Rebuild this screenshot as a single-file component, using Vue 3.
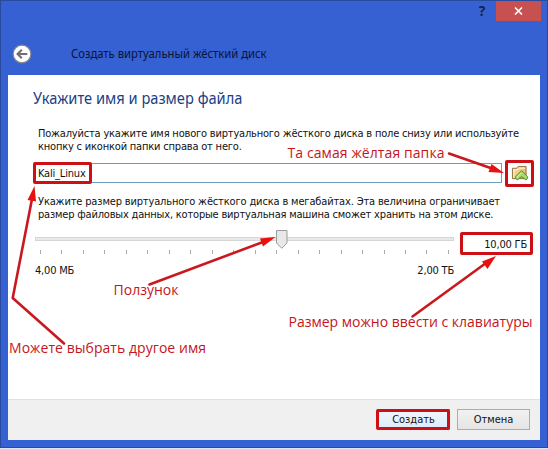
<script setup>
const ticks = Array.from({ length: 20 }, (_, i) => i)
</script>

<template>
  <div class="window">
    <header class="titlebar">
      <div class="controls">
        <span class="help">?</span>
        <button class="close" aria-label="Закрыть">
          <svg width="9" height="8" viewBox="0 0 9 8"><path d="M1 .5 8 7.5M8 .5 1 7.5" stroke="#fff" stroke-width="1.6" /></svg>
        </button>
      </div>
      <div class="caption">
        <svg class="back" width="20" height="20" viewBox="0 0 20 20">
          <circle cx="10" cy="10" r="8.9" fill="#fff" stroke="#7f8492" stroke-width="1.2" />
          <path d="M15.3 10H6M9.8 5.8 5.6 10l4.2 4.2" fill="none" stroke="#707070" stroke-width="2.1" />
        </svg>
        <span class="caption-text">Создать виртуальный жёсткий диск</span>
      </div>
    </header>

    <main class="body">
      <h1>Укажите имя и размер файла</h1>
      <p class="name-help">
        <span>Пожалуйста укажите имя нового виртуального жёсткого диска в поле снизу или используйте</span>
        <span>кнопку с иконкой папки справа от него.</span>
      </p>
      <div class="file-row">
        <div class="input"><span>Kali_Linux</span></div>
        <svg class="folder" width="17" height="16" viewBox="0 0 18 17">
          <defs>
            <linearGradient id="fg" x1="0" y1="0" x2="1" y2="1"><stop offset="0" stop-color="#fbe9b4" /><stop offset="1" stop-color="#d9a84e" /></linearGradient>
          </defs>
          <path d="M1.500 14.500v-11h4.500l1.500-2h8.500v13z" fill="url(#fg)" stroke="#8d6a3c" />
          <path d="M3 13.500V5h5l1-1.500h6" fill="none" stroke="#fff3cc" />
          <path d="M11.200 6 17.400 12.300v2.200l-1.600 1.300-4.600-3.500-4.600 3.500L5 14.500v-2.200z" fill="#a5dc6c" stroke="#4d8a2c" />
          <path d="M11.200 8.200 6.600 12.800v1" fill="none" stroke="#e2f8c4" />
        </svg>
      </div>
      <p class="size-help">
        <span class="l3">Укажите размер виртуального жёсткого диска в мегабайтах. Эта величина ограничивает</span>
        <span>размер файловых данных, которые виртуальная машина сможет хранить на этом диске.</span>
      </p>
      <div class="size-row">
        <div class="slider">
          <div class="groove">
            <svg class="thumb" width="12" height="19" viewBox="0 0 12 19"><path d="M.5.5h10.500v12.500L5.750 18.300.5 13z" fill="#e8e8e8" stroke="#9c9c9c" /></svg>
          </div>
          <div class="ticks"><i v-for="t in ticks" :key="t"></i></div>
          <div class="range"><span>4,00 МБ</span><span>2,00 ТБ</span></div>
        </div>
        <div class="size"><span>10,00 ГБ</span></div>
      </div>
    </main>

    <footer class="footer">
      <button class="btn primary"><span>Создать</span></button>
      <button class="btn"><span>Отмена</span></button>
    </footer>

    <svg class="notes" width="548" height="449" viewBox="0 0 548 449">
      <g fill="none" stroke="#cc1016" stroke-width="3" stroke-linejoin="round">
        <rect x="34.500" y="163.500" width="56" height="19" rx=".5" />
        <rect x="506.500" y="161.500" width="26" height="24" rx=".5" />
        <rect x="461.500" y="233.500" width="70" height="20" rx=".5" />
        <rect x="377.500" y="410.500" width="71" height="18" rx=".5" />
      </g>
      <g fill="none" stroke="#c9181e" stroke-width="2.600" stroke-linecap="round" stroke-linejoin="round">
        <path d="M64 343.500 12.700 298 32 199" />
        <path d="M449 153.500 492 168.500" />
        <path d="M149.500 284.500 263 242" />
        <path d="M412.500 316.500 486 263" />
      </g>
      <g fill="#ea1010">
        <path d="M34.500 186 27.500 200 36 201.500z" />
        <path d="M504 173 488.500 172 491.500 164z" />
        <path d="M275.500 237 263 246.500 260 238.500z" />
        <path d="M496 256 487.500 269 482 261.500z" />
      </g>
      <g class="note-text">
        <text x="287.500" y="157.500" textLength="157">Та самая жёлтая папка</text>
        <text x="113.500" y="295" textLength="65">Ползунок</text>
        <text x="9" y="353" textLength="197">Можете выбрать другое имя</text>
        <text x="288.500" y="327" textLength="244">Размер можно ввести с клавиатуры</text>
      </g>
    </svg>
  </div>
</template>

<style>
body { margin: 0; background: #dce6f6; }
</style>

<style scoped>
.window {
  position: relative;
  box-sizing: border-box;
  width: 548px;
  height: 448px;
  padding: 0 7px 7px;
  border: 1px solid #2a4a9e;
  background: #3661d2;
  display: flex;
  flex-direction: column;
  font-family: "DejaVu Sans Condensed", "DejaVu Sans", sans-serif;
  font-stretch: condensed;
  font-size: 11px;
  letter-spacing: -0.19px;
  color: #111;
}
.titlebar { height: 74px; flex: none; display: flex; flex-direction: column; }
.controls { display: flex; justify-content: flex-end; height: 20px; }
.help { width: 28px; text-align: center; font: bold 14px/20px "Open Sans", sans-serif; color: #14234c; }
.close {
  width: 45px; height: 20px; margin-right: -1px; padding: 0; border: 0; background: #c75050;
  display: flex; align-items: center; justify-content: center;
}
.caption { display: flex; align-items: center; height: 20px; margin-top: 23px; padding-left: 4px; }
.back { flex: none; }
.caption-text {
  margin-left: 39px; font: 12px/20px "Noto Sans", sans-serif; letter-spacing: 0;
  transform: scaleX(.938); transform-origin: left; color: #0a1436; white-space: nowrap;
}
.body {
  box-sizing: border-box;
  height: 324px; flex: none;
  background: #fff;
  padding: 13px 6px 0 27px;
  display: flex; flex-direction: column;
}
h1 {
  margin: 0 0 0 -2px; height: 20px; font: 400 16px/20px "Noto Sans", sans-serif; letter-spacing: 0;
  transform: scaleX(.915); transform-origin: left; color: #1c3f86; white-space: nowrap;
}
p { margin: 0; white-space: nowrap; display: flex; flex-direction: column; align-items: flex-start; line-height: 13px; padding-left: 3px; }
.name-help { margin-top: 19px; }
.file-row { display: flex; align-items: flex-start; margin-top: 10px; height: 20px; gap: 9px; }
.input { box-sizing: border-box; width: 467px; height: 20px; border: 1px solid #6ba0bb; padding-left: 2px; line-height: 20px; background: #fff; }
.folder { margin-top: 2px; }
.size-help { margin-top: 12px; }
.l3 { letter-spacing: -0.15px; }
.size-row { display: flex; margin-top: 10px; }
.slider { width: 419px; flex: none; padding-top: 6px; }
.groove { box-sizing: border-box; height: 4px; border: 1px solid #d6d6d6; background: #e7eaea; display: flex; }
.thumb { flex: none; margin: -8px 0 0 240px; }
.ticks { display: flex; justify-content: space-between; margin: 9px 5px 0; }
.ticks i { width: 1px; height: 4px; background: #aaa; }
.range { display: flex; justify-content: space-between; margin-top: 9px; line-height: 16px; }
.size { width: 72px; height: 22px; margin-left: 6px; line-height: 27px; text-align: right; box-sizing: border-box; padding-right: 5px; }
.footer {
  box-sizing: border-box; height: 41px; border-top: 1px solid #dfdfdf; background: #f0f0f0;
  display: flex; justify-content: flex-end; gap: 7px; padding: 9px 10px 0 0;
}
.btn {
  box-sizing: border-box; width: 73px; height: 21px; padding: 0; border: 1px solid #acacac;
  background: linear-gradient(#f1f1f1, #e5e5e5); font: inherit; color: inherit; line-height: 19px;
}
.primary { background: linear-gradient(#f0f7fd, #dcecfc); }
.notes { position: absolute; left: -1px; top: -1px; }
.note-text { font: 14px "Open Sans", sans-serif; fill: #c4161c; letter-spacing: 0; }
</style>
